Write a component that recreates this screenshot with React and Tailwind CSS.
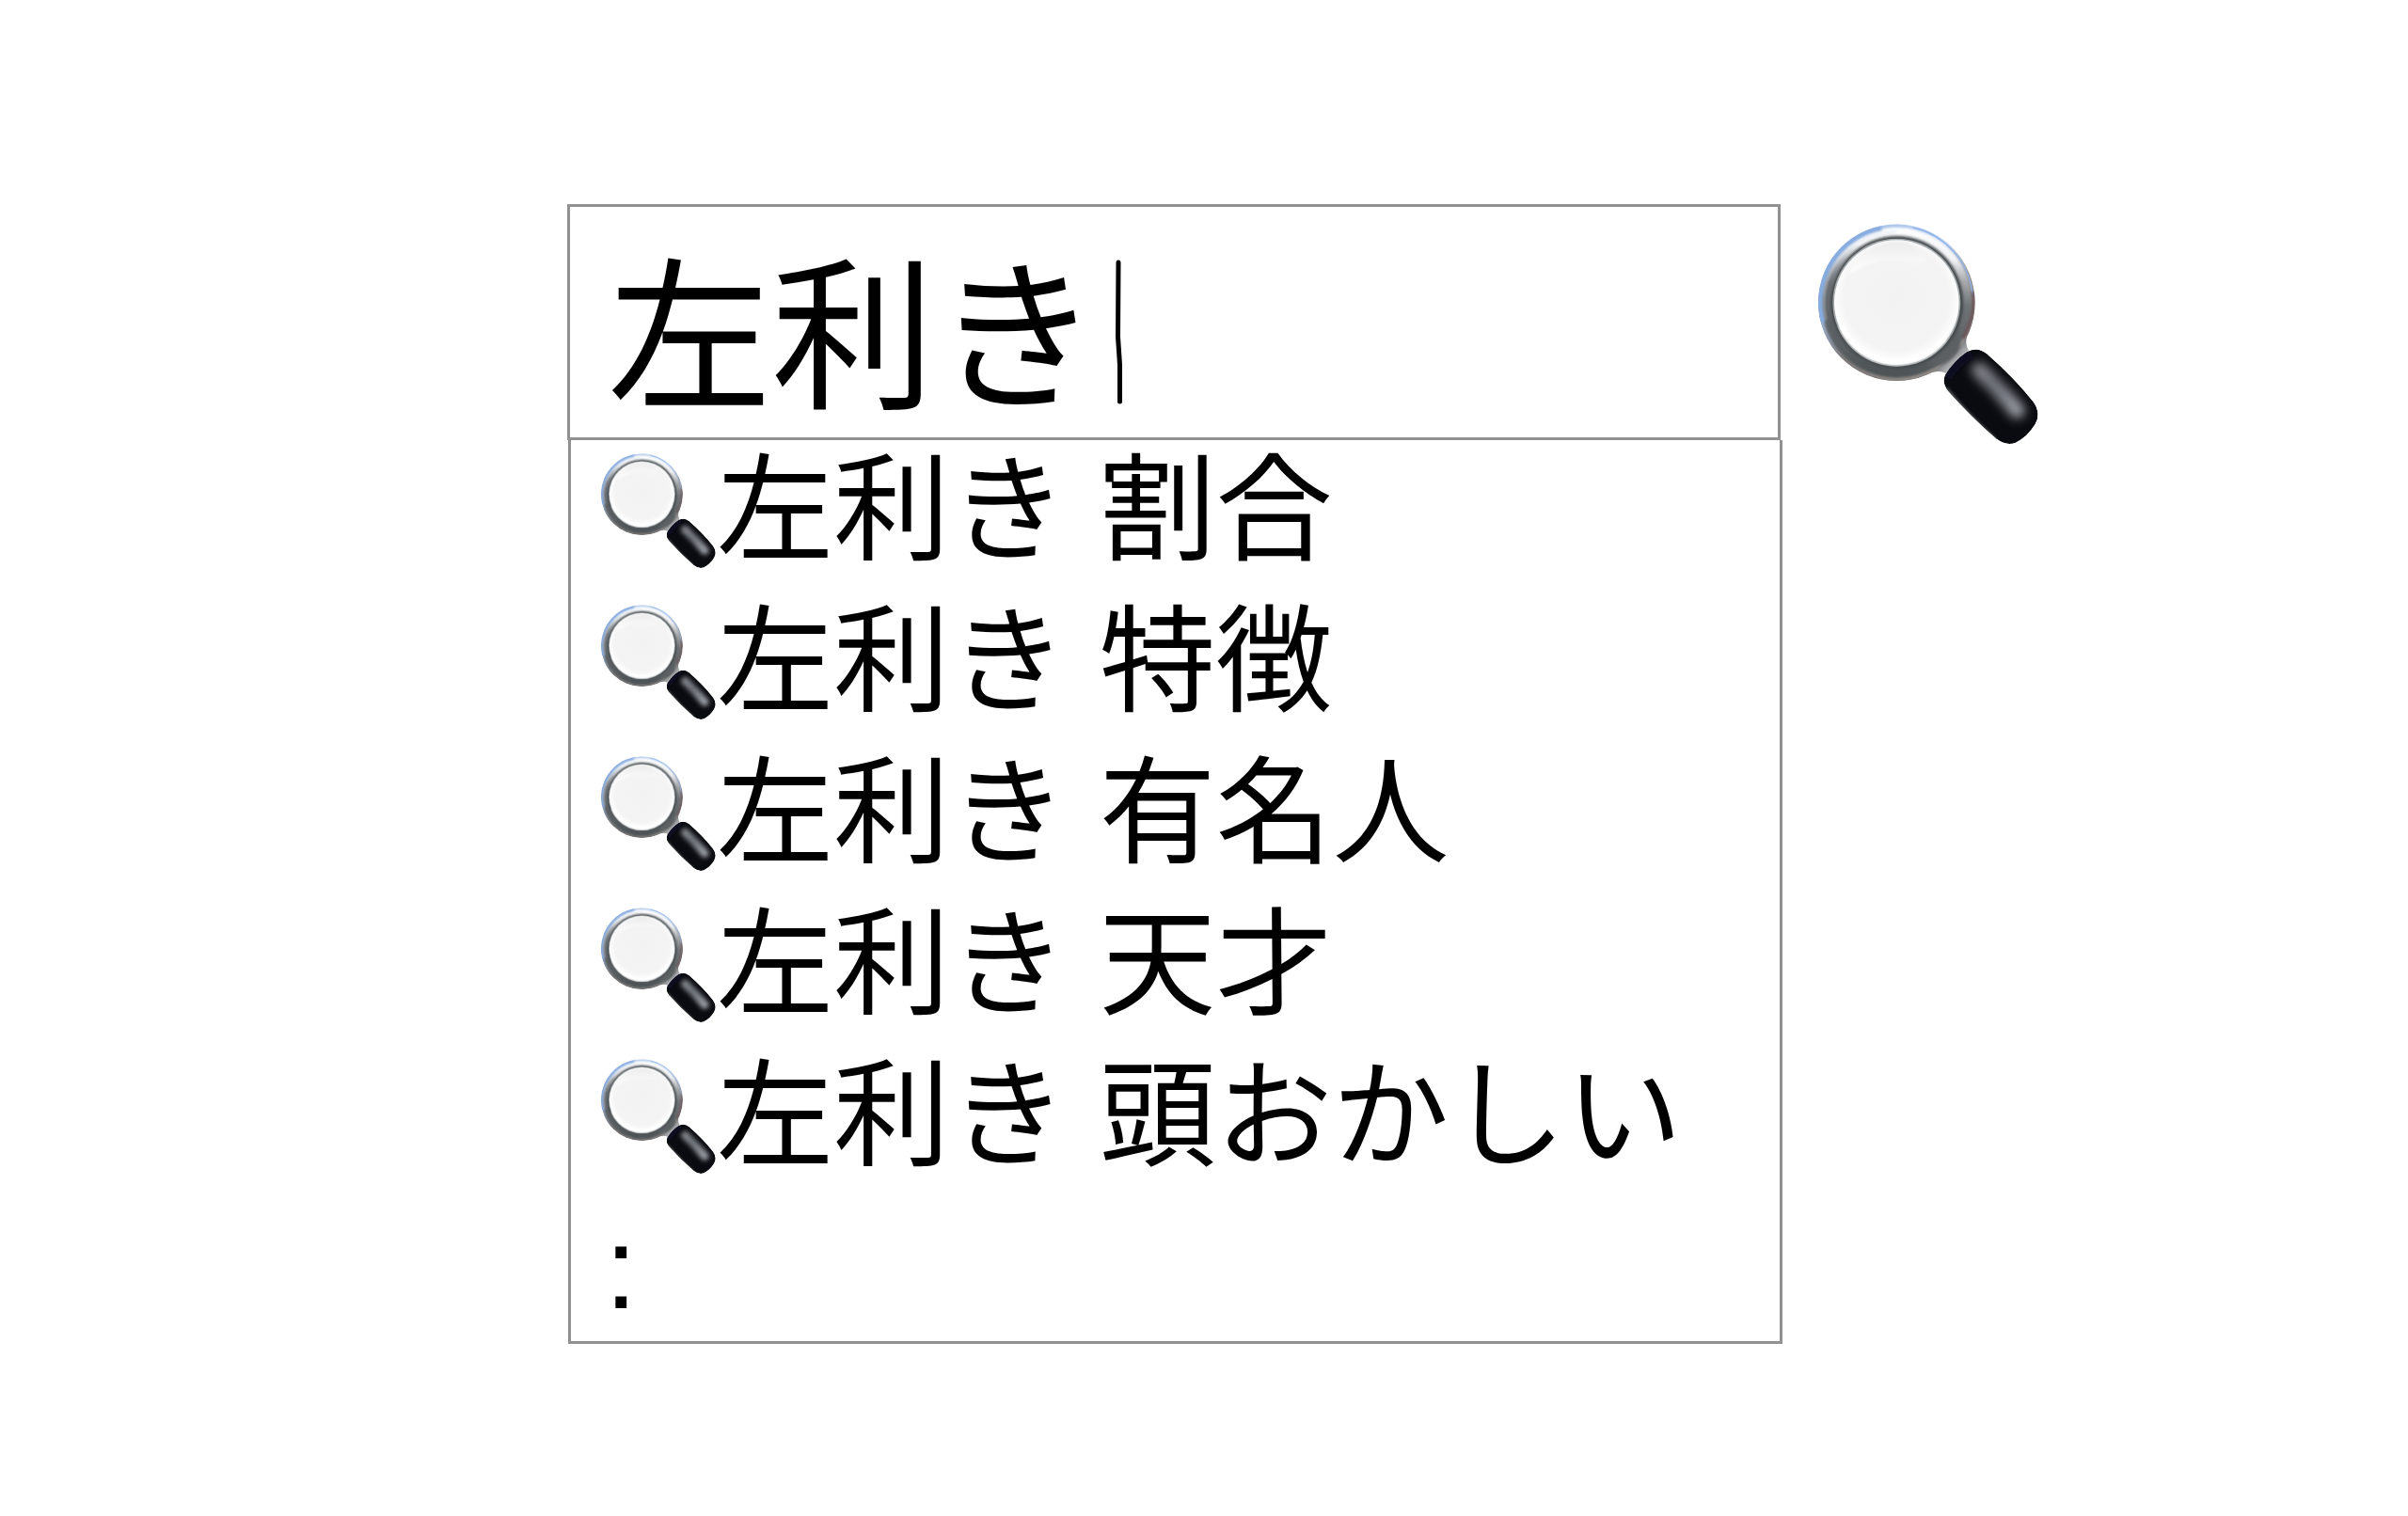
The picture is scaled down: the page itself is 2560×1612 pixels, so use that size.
import React, { useId, useState } from 'react';

const suggestions = [
  '左利き 割合',
  '左利き 特徴',
  '左利き 有名人',
  '左利き 天才',
  '左利き 頭おかしい',
];

const GRIP =
  'M572 494 Q604 474 636 500 Q722 575 784 653 Q810 690 790 724 Q766 764 728 783 Q697 795 665 770 Q585 700 512 618 Q490 590 504 566 Q530 524 572 494 Z';

const MagnifierIcon = ({ className }) => {
  const id = useId();

  return (
    <svg className={className} viewBox="98 85 702 702" aria-hidden="true">
      <defs>
        <linearGradient id={`${id}-edge`} gradientUnits="userSpaceOnUse" x1="200" y1="130" x2="480" y2="560">
          <stop offset="0" stopColor="#86abdf" />
          <stop offset="0.35" stopColor="#a9c5ec" />
          <stop offset="0.6" stopColor="#8e8583" />
          <stop offset="1" stopColor="#a39b95" />
        </linearGradient>
        <linearGradient id={`${id}-band`} gradientUnits="userSpaceOnUse" x1="370" y1="90" x2="340" y2="580">
          <stop offset="0" stopColor="#ffffff" />
          <stop offset="0.2" stopColor="#f1f3f5" />
          <stop offset="0.34" stopColor="#a7aaad" />
          <stop offset="0.5" stopColor="#6f7376" />
          <stop offset="0.8" stopColor="#5b6063" />
          <stop offset="1" stopColor="#4b5154" />
        </linearGradient>
        <radialGradient id={`${id}-lens`} cx="0.5" cy="0.46" r="0.54">
          <stop offset="0" stopColor="#f2f2f2" />
          <stop offset="0.78" stopColor="#f4f4f4" />
          <stop offset="0.93" stopColor="#fdfdfd" />
          <stop offset="1" stopColor="#dfe3e6" />
        </radialGradient>
        <linearGradient id={`${id}-shine`} x1="0" y1="0" x2="0" y2="1">
          <stop offset="0" stopColor="#ececec" />
          <stop offset="1" stopColor="#ffffff" />
        </linearGradient>
        <linearGradient id={`${id}-shade`} gradientUnits="userSpaceOnUse" x1="170" y1="430" x2="235" y2="150">
          <stop offset="0" stopColor="#5a5f63" />
          <stop offset="0.5" stopColor="#6a6f74" />
          <stop offset="1" stopColor="#8d949b" stopOpacity="0" />
        </linearGradient>
        <linearGradient id={`${id}-neck`} gradientUnits="userSpaceOnUse" x1="465" y1="460" x2="545" y2="540">
          <stop offset="0" stopColor="#53585b" />
          <stop offset="0.55" stopColor="#74777a" />
          <stop offset="1" stopColor="#cdced0" />
        </linearGradient>
        <linearGradient id={`${id}-glow`} gradientUnits="userSpaceOnUse" x1="600" y1="550" x2="740" y2="690">
          <stop offset="0" stopColor="#85888e" />
          <stop offset="0.4" stopColor="#72767d" />
          <stop offset="1" stopColor="#a0a4ab" />
        </linearGradient>
        <clipPath id={`${id}-disc`}>
          <circle cx="348" cy="336" r="250" />
        </clipPath>
        <clipPath id={`${id}-gripclip`}>
          <path d={GRIP} />
        </clipPath>
        <filter id={`${id}-soft`} filterUnits="userSpaceOnUse" x="60" y="50" width="780" height="780">
          <feGaussianBlur stdDeviation="5" />
        </filter>
        <filter id={`${id}-wide`} filterUnits="userSpaceOnUse" x="60" y="50" width="780" height="780">
          <feGaussianBlur stdDeviation="16" />
        </filter>
      </defs>

      {/* neck between the rim and the grip */}
      <path
        d="M588 400 Q558 462 578 488 L505 562 Q478 545 415 576 L400 500 L500 400 Z"
        fill={`url(#${id}-neck)`}
      />

      {/* rim */}
      <g clipPath={`url(#${id}-disc)`}>
        <circle cx="348" cy="336" r="250" fill={`url(#${id}-band)`} />
        <circle cx="348" cy="336" r="246" fill="none" stroke={`url(#${id}-edge)`} strokeWidth="10" filter={`url(#${id}-soft)`} />
        <path d="M112 400 A243 243 0 0 1 300 98" fill="none" stroke="#86abe0" strokeWidth="18" filter={`url(#${id}-soft)`} />
        <path d="M128 390 A226 226 0 0 1 348 110" fill="none" stroke="#edf1f5" strokeWidth="8" filter={`url(#${id}-soft)`} />
        <path d="M190 490 A218 218 0 0 1 245 143" fill="none" stroke={`url(#${id}-shade)`} strokeWidth="20" filter={`url(#${id}-soft)`} />
        <path d="M400 97 A245 245 0 0 1 590 310" fill="none" stroke="#8fb3ea" strokeWidth="4" />
        <path d="M592 300 A245 245 0 0 1 560 450" fill="none" stroke="#5c4046" strokeWidth="8" filter={`url(#${id}-soft)`} />
      </g>
      {/* carries the dark metal from the rim into the neck */}
      <path d="M545 400 Q530 470 440 530 L490 535 Q530 520 550 480 Z" fill="#5c6164" filter={`url(#${id}-soft)`} />

      {/* lens */}
      <circle cx="349" cy="335" r="211" fill="#3f4447" filter={`url(#${id}-soft)`} />
      <circle cx="348" cy="336" r="204" fill="#a2a8ab" />
      <circle cx="348" cy="336" r="199" fill={`url(#${id}-lens)`} />
      <path
        d="M196 245 C225 175 285 142 350 142 C395 142 425 165 440 205 C400 215 385 202 330 202 C270 203 235 225 196 245 Z"
        fill={`url(#${id}-shine)`}
        filter={`url(#${id}-soft)`}
      />
      <path d="M172 410 A190 190 0 0 0 500 450" fill="none" stroke="#ffffff" strokeWidth="16" filter={`url(#${id}-soft)`} />

      {/* grip */}
      <g clipPath={`url(#${id}-gripclip)`}>
        <path d={GRIP} fill="#0a0b10" />
        <path
          d="M612 552 Q672 608 732 680"
          fill="none"
          stroke={`url(#${id}-glow)`}
          strokeWidth="50"
          strokeLinecap="round"
          filter={`url(#${id}-wide)`}
        />
        <path d="M506 610 Q580 700 662 772" fill="none" stroke="#5b5e63" strokeWidth="10" filter={`url(#${id}-soft)`} />
        <path d="M508 575 Q540 525 585 498" fill="none" stroke="#0d1024" strokeWidth="30" filter={`url(#${id}-soft)`} />
      </g>
    </svg>
  );
};

const TextCursor = () => (
  <svg className="mt-5 w-2 h-[154px] shrink-0" viewBox="0 0 8 154" aria-hidden="true">
    <path
      d="M3 3 L2.5 82 L4.5 112 L4.5 151"
      fill="none"
      stroke="#000000"
      strokeWidth="5"
      strokeLinecap="round"
      strokeLinejoin="round"
    />
  </svg>
);

const App = () => {
  const [query, setQuery] = useState('左利き');

  return (
    <main className="min-h-screen bg-white pt-[217px] pl-[603px] pr-[393px] text-black font-['Liberation_Sans','Noto_Sans_CJK_JP',sans-serif]">
      <form className="flex items-start gap-10" onSubmit={(e) => e.preventDefault()}>
        <div className="flex-1 min-w-0">
          <div className="flex items-start h-[251px] pl-10 pt-9 border-3 border-[#919191]">
            <input
              type="text"
              aria-label="検索"
              autoComplete="off"
              className="w-[540px] h-[210px] text-[174px] leading-[210px] bg-transparent outline-none"
              value={query}
              onChange={(e) => setQuery(e.target.value)}
            />
            <TextCursor />
          </div>

          <div className="ml-px -mr-0.5 h-[961px] border-3 border-t-0 border-[#919191]">
            <ul>
              {suggestions.map((text) => (
                <li key={text} className="h-[161px] pt-3.5 pl-8">
                  <button
                    type="button"
                    className="flex items-center gap-px text-[124px] leading-[122px] whitespace-nowrap"
                    onClick={() => setQuery(text)}
                  >
                    <MagnifierIcon className="w-[122px] h-[122px] shrink-0" />
                    <span>{text}</span>
                  </button>
                </li>
              ))}
            </ul>
            <p className="pt-3.5 pl-9 text-[124px] leading-[122px]">:</p>
          </div>
        </div>

        <button type="submit" aria-label="検索" className="mt-[21px] shrink-0">
          <MagnifierIcon className="w-[234px] h-[234px]" />
        </button>
      </form>
    </main>
  );
};

export default App;
